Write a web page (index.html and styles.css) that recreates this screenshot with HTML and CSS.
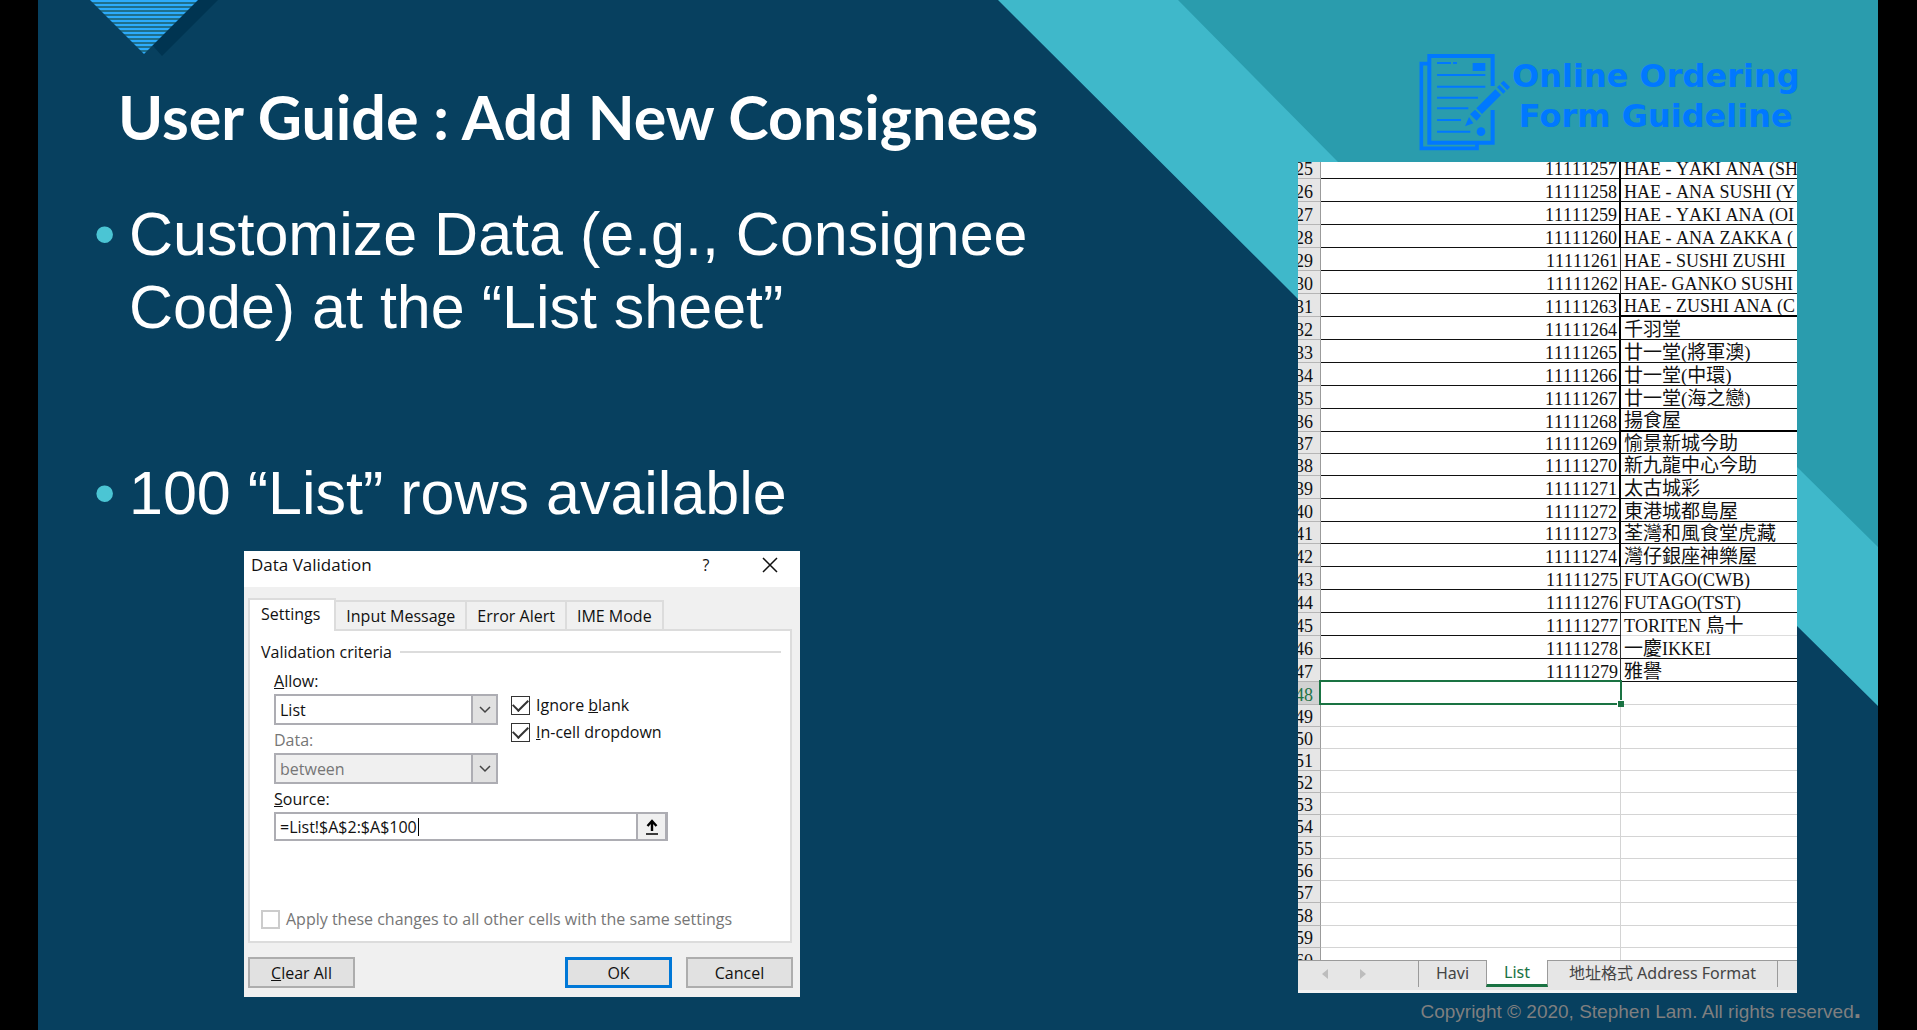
FILE: index.html
```html
<!DOCTYPE html>
<html lang="en">
<head>
<meta charset="utf-8">
<title>User Guide : Add New Consignees</title>
<link rel="stylesheet" href="styles.css">
</head>
<body>
<main class="slide">
  <svg class="deco-right" viewBox="0 0 880 706" aria-hidden="true">
    <path class="band-light" d="M0 0H880V706L799 626L600 430L472 472L300 299Z"/>
    <path class="band-dark" d="M180 0H880V547L799 467L600 300L340 162Z"/>
  </svg>
  <svg class="deco-left" viewBox="0 0 130 58" aria-hidden="true">
    <defs>
      <pattern id="stripes" width="4" height="4" patternUnits="userSpaceOnUse">
        <rect width="4" height="4" fill="#1f6f8c"/>
        <rect width="4" height="2" fill="#2cabfb"/>
      </pattern>
    </defs>
    <path d="M30 0H128L72 56L64 47Z" fill="#003451"/>
    <path d="M0 0H108L54 54Z" fill="url(#stripes)"/>
  </svg>

  <div class="columns">
    <section class="left">
      <h1>User Guide : Add New Consignees</h1>
      <ul class="points">
        <li><span>Customize Data (e.g., Consignee Code) at the “List sheet”</span></li>
        <li><span>100 “List” rows available</span></li>
      </ul>

      <form class="dialog">
        <header class="titlebar">
          <h2>Data Validation</h2>
          <button type="button" class="tb-btn">?</button>
          <button type="button" class="tb-btn" aria-label="Close">
            <svg width="16" height="16" viewBox="0 0 16 16"><path d="M1 1L15 15M15 1L1 15" stroke="#111" stroke-width="1.5"/></svg>
          </button>
        </header>
        <div class="tabs">
          <button type="button" class="tab active">Settings</button>
          <button type="button" class="tab">Input Message</button>
          <button type="button" class="tab">Error Alert</button>
          <button type="button" class="tab">IME Mode</button>
        </div>
        <div class="panel">
          <div class="legend">Validation criteria</div>
          <div class="criteria">
            <div class="fields">
              <label for="allow"><u>A</u>llow:</label>
              <div class="combo">
                <select id="allow"><option>List</option></select>
                <span class="arrow"><svg width="12" height="8" viewBox="0 0 12 8"><path d="M1 1L6 6L11 1"/></svg></span>
              </div>
              <label for="data" class="dim">Data:</label>
              <div class="combo">
                <select id="data" disabled><option>between</option></select>
                <span class="arrow"><svg width="12" height="8" viewBox="0 0 12 8"><path d="M1 1L6 6L11 1"/></svg></span>
              </div>
            </div>
            <div class="checks">
              <label><input type="checkbox" checked><span>Ignore <u>b</u>lank</span></label>
              <label><input type="checkbox" checked><span><u>I</u>n-cell dropdown</span></label>
            </div>
          </div>
          <div class="source">
            <label for="source"><u>S</u>ource:</label>
            <div class="source-box">
              <input id="source" type="text" value="=List!$A$2:$A$100">
              <span class="caret"></span>
              <button type="button" aria-label="Collapse">
                <svg width="14" height="16" viewBox="0 0 14 16"><path d="M7 12V3M2.500 7L7 2L11.500 7" fill="none" stroke="#000" stroke-width="2.400"/><path d="M1 15H13" stroke="#000" stroke-width="1.500"/></svg>
              </button>
            </div>
          </div>
          <label class="apply dim"><input type="checkbox" disabled><span>Apply these changes to all other cells with the same settings</span></label>
        </div>
        <div class="actions">
          <button type="button" class="btn"><u>C</u>lear All</button>
          <button type="button" class="btn primary">OK</button>
          <button type="button" class="btn">Cancel</button>
        </div>
      </form>
    </section>

    <section class="right">
      <div class="logo">
        <svg width="94" height="100" viewBox="114 66 282 300" fill="none" stroke="#0078ff" aria-hidden="true">
          <path d="M146 101H124V355H291V342" stroke-width="11"/>
          <path d="M338 168V78H148V338H338V240" stroke-width="12"/>
          <path d="M171 99H213M219 99H231M171 135H316M171 170H316M171 203H294M171 235H265M171 270H243M171 305H271" stroke-width="6"/>
          <g fill="#0078ff" stroke="none">
            <path d="M278 99H316V123H278Z"/>
            <circle cx="303" cy="305" r="13"/>
            <path d="M371 152L390 171L382 180L362 160ZM358 165L377 184L370 191L351 172ZM346 178L363 195L306 252L289 235ZM285 239L303 257L290 272L270 253ZM267 261L280 280L255 289Z"/>
          </g>
        </svg>
        <div class="logo-text">Online Ordering<br>Form Guideline</div>
      </div>

      <div class="sheet">
        <div class="grid">
          <table>
            <colgroup><col class="c-head"><col class="c-code"><col></colgroup>
            <tbody>
            <tr class="thick"><th>25</th><td>11111257</td><td>HAE - YAKI ANA (SH</td></tr>
            <tr class="thick"><th>26</th><td>11111258</td><td>HAE - ANA SUSHI (Y</td></tr>
            <tr class="thick"><th>27</th><td>11111259</td><td>HAE - YAKI ANA (OI</td></tr>
            <tr class="thick"><th>28</th><td>11111260</td><td>HAE - ANA ZAKKA (</td></tr>
            <tr><th>29</th><td>11111261</td><td>HAE - SUSHI ZUSHI</td></tr>
            <tr><th>30</th><td>11111262</td><td>HAE- GANKO SUSHI</td></tr>
            <tr class="thick end"><th>31</th><td>11111263</td><td>HAE - ZUSHI ANA (C</td></tr>
            <tr class="thick"><th>32</th><td>11111264</td><td class="zh">千羽堂</td></tr>
            <tr class="thick"><th>33</th><td>11111265</td><td class="zh">廿一堂(將軍澳)</td></tr>
            <tr class="thick"><th>34</th><td>11111266</td><td class="zh">廿一堂(中環)</td></tr>
            <tr class="thick"><th>35</th><td>11111267</td><td class="zh">廿一堂(海之戀)</td></tr>
            <tr class="thick end"><th>36</th><td>11111268</td><td class="zh">揚食屋</td></tr>
            <tr class="thick short"><th>37</th><td>11111269</td><td class="zh">愉景新城今助</td></tr>
            <tr class="thick short"><th>38</th><td>11111270</td><td class="zh">新九龍中心今助</td></tr>
            <tr class="thick"><th>39</th><td>11111271</td><td class="zh">太古城彩</td></tr>
            <tr class="thick"><th>40</th><td>11111272</td><td class="zh">東港城都島屋</td></tr>
            <tr class="thick short"><th>41</th><td>11111273</td><td class="zh">荃灣和風食堂虎藏</td></tr>
            <tr class="thick"><th>42</th><td>11111274</td><td class="zh">灣仔銀座神樂屋</td></tr>
            <tr><th>43</th><td>11111275</td><td>FUTAGO(CWB)</td></tr>
            <tr><th>44</th><td>11111276</td><td>FUTAGO(TST)</td></tr>
            <tr class="faint"><th>45</th><td>11111277</td><td>TORITEN <span class="zh">鳥十</span></td></tr>
            <tr><th>46</th><td>11111278</td><td><span class="zh">一慶</span>IKKEI</td></tr>
            <tr><th>47</th><td>11111279</td><td class="zh">雅譽</td></tr>
            <tr class="blank picked"><th>48</th><td><i class="selection"></i></td><td></td></tr>
            <tr class="blank short"><th>49</th><td></td><td></td></tr>
            <tr class="blank short"><th>50</th><td></td><td></td></tr>
            <tr class="blank short"><th>51</th><td></td><td></td></tr>
            <tr class="blank short"><th>52</th><td></td><td></td></tr>
            <tr class="blank short"><th>53</th><td></td><td></td></tr>
            <tr class="blank short"><th>54</th><td></td><td></td></tr>
            <tr class="blank short"><th>55</th><td></td><td></td></tr>
            <tr class="blank short"><th>56</th><td></td><td></td></tr>
            <tr class="blank short"><th>57</th><td></td><td></td></tr>
            <tr class="blank"><th>58</th><td></td><td></td></tr>
            <tr class="blank short"><th>59</th><td></td><td></td></tr>
            <tr class="blank"><th>60</th><td></td><td></td></tr>
            </tbody>
          </table>
        </div>
        <nav class="sheet-tabs">
          <span class="scroll">
            <svg width="6" height="10" viewBox="0 0 6 10"><path d="M6 0V10L0 5Z"/></svg>
            <svg width="6" height="10" viewBox="0 0 6 10"><path d="M0 0V10L6 5Z"/></svg>
          </span>
          <button type="button" class="s-havi">Havi</button>
          <button type="button" class="s-list">List</button>
          <button type="button" class="s-addr">地址格式 Address Format</button>
        </nav>
      </div>
    </section>
  </div>
  <footer>Copyright © 2020, Stephen Lam. All rights reserved<b>.</b></footer>
</main>
</body>
</html>
```
FILE: styles.css
```css
* { box-sizing: border-box; }

body {
  margin: 0;
  background: #000;
  font-family: "Liberation Sans", Arial, sans-serif;
}

button, input, select {
  font: inherit;
  color: inherit;
  margin: 0;
  border-radius: 0;
}

.slide {
  position: relative;
  display: flex;
  flex-direction: column;
  min-height: 100vh;
  margin: 0 39px 0 38px;
  background: #07405f;
  overflow: hidden;
}

.deco-right {
  position: absolute;
  top: 0;
  right: 0;
  width: 880px;
  height: 706px;
}

.deco-left {
  position: absolute;
  top: 0;
  left: 52px;
  width: 130px;
  height: 58px;
}

.band-light { fill: #3fb8ca; }
.band-dark { fill: #2a9cad; }

.columns {
  position: relative;
  display: grid;
  grid-template-columns: 1fr 499px;
  flex: 1;
  padding-right: 81px;
}

/* Left column */
.left {
  padding: 79px 0 0 56px;
}

h1 {
  margin: 0;
  padding-left: 24px;
  font: bold 61px/76px Lato, sans-serif;
  color: #fff;
  white-space: nowrap;
}

.points {
  display: flex;
  flex-direction: column;
  gap: 113px;
  max-width: 980px;
  margin: 43px 0 0;
  padding: 0;
  list-style: none;
  color: #fff;
  font-size: 61px;
  line-height: 73px;
}

.points li { display: flex; }

.points li::before {
  content: "•";
  flex: none;
  width: 35px;
  color: #4bc5d4;
}

/* Dialog */
.dialog {
  width: 556px;
  margin: 21px 0 0 150px;
  padding-bottom: 9px;
  background: #f0f0f0;
  color: #111;
  font: 16px/20px "Open Sans", sans-serif;
}

.titlebar {
  display: flex;
  align-items: flex-start;
  height: 36px;
  padding: 3px 13px 0 7px;
  background: #fff;
}

.titlebar h2 {
  flex: 1;
  margin: 0;
  font: 17px/22px "Open Sans", sans-serif;
}

.tb-btn {
  display: grid;
  place-items: center;
  width: 34px;
  height: 22px;
  margin-left: 30px;
  padding: 0;
  border: 0;
  background: none;
}

.tabs {
  display: flex;
  align-items: flex-end;
  height: 42px;
  padding-left: 4px;
}

.tab {
  height: 29px;
  padding: 0 10px;
  border: 2px solid #dcdcdc;
  border-left: 0;
  border-bottom: 0;
  background: #f0f0f0;
}

.tab.active {
  position: relative;
  z-index: 1;
  height: 33px;
  margin-bottom: -2px;
  padding: 0 14px 3px 11px;
  border-left: 2px solid #dcdcdc;
  background: #fff;
}

.panel {
  margin: 0 8px 0 4px;
  height: 314px;
  padding: 11px 9px 0 11px;
  border: 2px solid #dcdcdc;
  background: #fff;
}

.legend {
  display: flex;
  align-items: center;
  gap: 8px;
}

.legend::after {
  content: "";
  flex: 1;
  height: 2px;
  background: #dcdcdc;
}

.criteria {
  display: flex;
  gap: 13px;
  padding: 9px 0 0 13px;
}

.fields { width: 224px; }

.fields > label,
.source > label {
  display: block;
  height: 23px;
}

.dim { color: #767676; }

.combo {
  position: relative;
  height: 31px;
  margin-bottom: 5px;
}

.combo select {
  appearance: none;
  width: 100%;
  height: 100%;
  padding: 0 4px;
  border: 2px solid #adadb3;
  background: #fff;
  opacity: 1;
}

.combo select:disabled {
  background: #f0f0f0;
  color: #767676;
}

.arrow {
  position: absolute;
  top: 0;
  right: 0;
  display: grid;
  place-items: center;
  width: 27px;
  height: 31px;
  border: 2px solid #adadb3;
  background: #e1e1e1;
  pointer-events: none;
}

.arrow path {
  fill: none;
  stroke: #444;
  stroke-width: 1.5;
}

.checks {
  display: flex;
  flex-direction: column;
  gap: 7px;
  padding-top: 24px;
}

.checks label,
.apply {
  display: flex;
  align-items: center;
  gap: 6px;
}

input[type="checkbox"] {
  appearance: none;
  display: grid;
  place-items: center;
  width: 19px;
  height: 19px;
  border: 1px solid #333;
  background: #fff;
}

input[type="checkbox"]:checked::after {
  content: "";
  width: 13px;
  height: 7px;
  margin-bottom: 3px;
  border: solid #333;
  border-width: 0 0 2px 2px;
  transform: rotate(-45deg);
}

input[type="checkbox"]:disabled { border: 2px solid #ccc; }

.source { padding-left: 13px; }

.source-box {
  position: relative;
  display: flex;
  width: 394px;
  height: 29px;
  border: 2px solid #adadb3;
}

.source-box input {
  flex: 1;
  min-width: 0;
  padding: 0 4px;
  border: 0;
  background: #fff;
}

.source-box button {
  display: grid;
  place-items: center;
  width: 30px;
  padding: 0;
  border: 2px solid #adadb3;
  border-width: 0 1px 0 2px;
  background: #f0f0f0;
}

.caret {
  position: absolute;
  top: 4px;
  left: 142px;
  width: 1px;
  height: 18px;
  background: #000;
}

.apply { padding-top: 68px; }

.actions {
  display: flex;
  gap: 14px;
  padding: 14px 7px 0 4px;
}

.btn {
  width: 107px;
  height: 31px;
  padding: 0;
  border: 2px solid #adadad;
  background: #e1e1e1;
}

.btn.primary {
  margin-left: auto;
  border: 3px solid #0078d7;
}

/* Right column */
.right {
  display: flex;
  flex-direction: column;
  padding-top: 52px;
}

.logo {
  display: flex;
  align-items: flex-start;
  height: 110px;
  padding-left: 120px;
}

.logo svg { flex: none; }

.logo-text {
  padding-top: 4px;
  font: bold 32px/40px "DejaVu Sans", sans-serif;
  color: #0078ff;
  text-align: center;
  white-space: nowrap;
}

.sheet {
  background: #fff;
  overflow: hidden;
}

.grid {
  height: 798px;
  overflow: hidden;
}

table {
  width: 100%;
  margin-top: -6px;
  table-layout: fixed;
  border-collapse: separate;
  border-spacing: 0;
  font: 18px/20px "Liberation Serif", "Noto Sans CJK TC", serif;
  font-kerning: none;
  color: #111;
}

.c-head { width: 23px; }
.c-code { width: 300px; }

tr { height: 23px; }
tr.short { height: 22px; }

th, td {
  height: inherit;
  padding: 3px 0 0;
  white-space: nowrap;
  overflow: hidden;
  line-height: 18px;
  border-bottom: 1px solid #111;
}

th {
  padding-right: 8px;
  border-right: 1px solid #9b9b9b;
  border-bottom-color: #b5b5b5;
  background: #e6e6e6;
  font-weight: normal;
  direction: rtl;
}

td:nth-child(2) {
  padding-right: 2px;
  border-right: 1px solid #333;
  text-align: right;
}

td:nth-child(3) { padding-left: 3px; }

.thick td:nth-child(2) { border-right: 2px solid #000; }
.end td:nth-child(3) { border-bottom: 2px solid #000; }
.faint td:nth-child(3) { border-bottom-color: #ddd; }
.blank td { border-color: #d4d4d4; }
.blank td:nth-child(2) { border-right-color: #d4d4d4; }

.zh {
  font-size: 19px;
  line-height: 18px;
}

.picked th {
  background: #d2d2d2;
  color: #217346;
}

.picked td:nth-child(2) {
  position: relative;
  overflow: visible;
}

.selection {
  position: absolute;
  inset: -2px -2px -1px -2px;
  border: 2px solid #1a7343;
}

.selection::after {
  content: "";
  position: absolute;
  right: -4px;
  bottom: -4px;
  width: 6px;
  height: 6px;
  border: 1px solid #fff;
  border-width: 1px 0 0 1px;
  background: #1a7343;
}

.sheet-tabs {
  display: flex;
  height: 33px;
  padding-bottom: 3px;
  border-bottom: 3px solid #f3f3f3;
  background: #e6e6e6;
  color: #444;
  font: 16px/20px "Noto Sans", "Noto Sans CJK TC", sans-serif;
  border-top: 1px solid #9b9b9b;
}

.sheet-tabs button {
  padding: 0 0 2px;
  border: 0;
  background: none;
  white-space: nowrap;
}

.scroll {
  display: flex;
  gap: 32px;
  align-items: center;
  width: 120px;
  padding-left: 24px;
  fill: #bdbdbd;
}

.sheet-tabs .s-havi {
  width: 68px;
  border-left: 1px solid #9b9b9b;
}

.sheet-tabs .s-list {
  width: 62px;
  margin-top: -1px;
  padding: 0;
  border: 1px solid #9b9b9b;
  border-width: 0 1px 3px;
  border-bottom-color: #1a7343;
  background: #fff;
  color: #1a7343;
}

.sheet-tabs .s-addr {
  width: 230px;
  border-right: 1px solid #9b9b9b;
}

footer {
  position: relative;
  height: 32px;
  padding-right: 17px;
  color: #7f7f7f;
  font-size: 19px;
  line-height: 28px;
  text-align: right;
}

footer b { font-size: 26px; line-height: 1px; }
```
